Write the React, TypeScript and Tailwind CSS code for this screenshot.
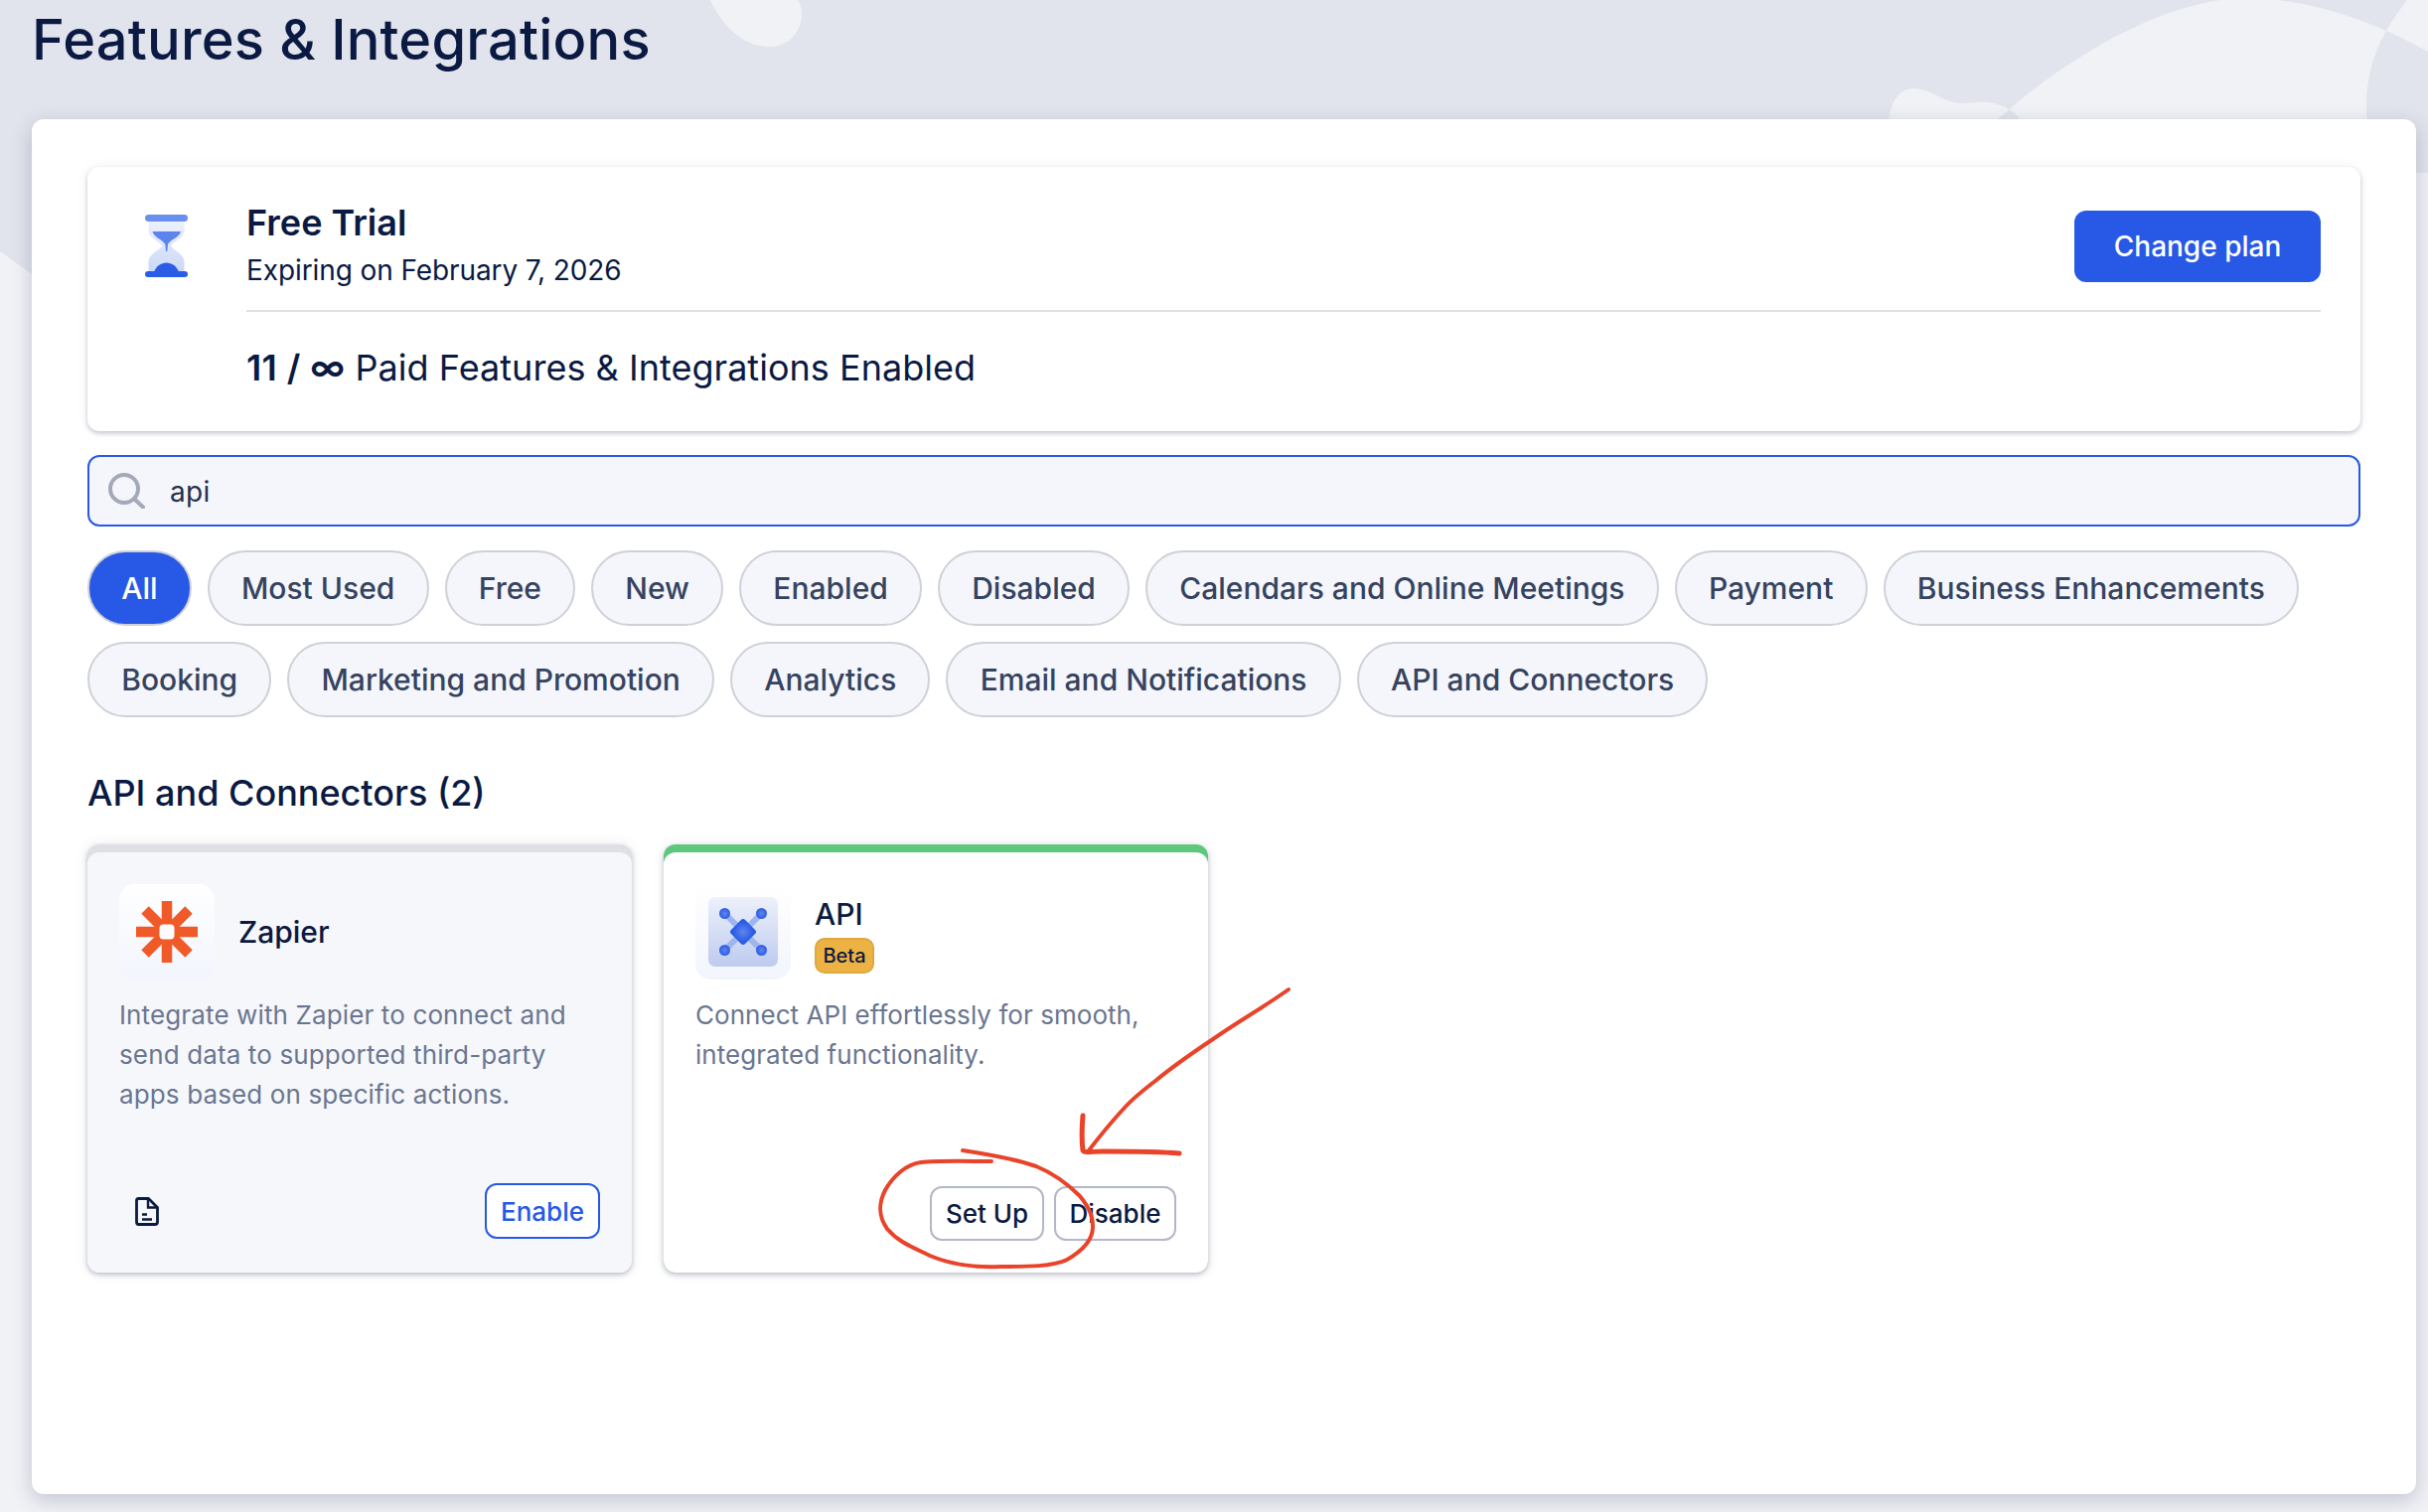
const chips = [
  "All",
  "Most Used",
  "Free",
  "New",
  "Enabled",
  "Disabled",
  "Calendars and Online Meetings",
  "Payment",
  "Business Enhancements",
  "Booking",
  "Marketing and Promotion",
  "Analytics",
  "Email and Notifications",
  "API and Connectors",
];

function Backdrop() {
  return (
    <svg className="absolute inset-0" width="2444" height="1522" viewBox="0 0 2444 1522" fill="none">
      <path
        fillRule="evenodd"
        fill="#f1f2f6"
        d="M715 0C725 22 745 47 775 47C795 47 808 30 807 12C807 8 805 3 803 0Z M1990 140C2060 70 2170 0 2258 -2C2330 -2 2395 25 2444 52L2444 140Z M2423 0C2400 30 2382 60 2382 110L2384 140L2444 140L2444 0Z M1902 140C1898 110 1908 89 1927 89C1942 89 1958 104 1975 104C1988 104 2005 98 2027 113C2033 119 2037 125 2038 140Z"
      />
      <path fill="#f1f2f6" d="M0 253L32 276L2300 300L2432 174L2444 174L2444 1522L0 1522Z" />
    </svg>
  );
}

function Hourglass() {
  return (
    <svg width="43" height="63" viewBox="0 0 43 63" fill="none" className="mt-[14px] shrink-0">
      <defs>
        <linearGradient id="glass" x1="0" y1="0" x2="0" y2="1">
          <stop offset="0" stopColor="#eef1fc" />
          <stop offset="1" stopColor="#cbd8f7" />
        </linearGradient>
      </defs>
      <path
        d="M3.5 6H39.5V16C39.5 24 28 27 26 31.5C28 36 39.5 39 39.5 48V58H3.5V48C3.5 39 15 36 17 31.5C15 27 3.5 24 3.5 16Z"
        fill="url(#glass)"
      />
      <rect x="0" y="0" width="43" height="7" rx="3.5" fill="#6a90ef" />
      <path d="M7.5 17H36C35 23 25 25 23 30L22.3 37H21L20.3 30C18 25 8.5 23 7.5 17Z" fill="#5b84ec" />
      <path d="M9 58C11 52 16 48.5 21.5 48.5C27 48.5 32 52 34 58Z" fill="#2b5ce6" />
      <rect x="0" y="57" width="43" height="6" rx="3" fill="#2b5ce6" />
    </svg>
  );
}

function SearchIcon() {
  return (
    <svg width="37" height="36" viewBox="0 0 37 36" fill="none" className="shrink-0">
      <circle cx="16" cy="16" r="14" stroke="#a4a9b8" strokeWidth="4" />
      <path d="M26.5 26.5L35 34.5" stroke="#a4a9b8" strokeWidth="4" strokeLinecap="round" />
    </svg>
  );
}

function ZapierLogo() {
  return (
    <svg width="64" height="64" viewBox="0 0 64 64" fill="none">
      <g stroke="#f05a28" strokeWidth="10.5">
        <path d="M32 1V63" />
        <path d="M1 32H63" />
        <path d="M10 10L54 54" />
        <path d="M54 10L10 54" />
      </g>
      <rect x="24.5" y="24.5" width="15" height="15" rx="4" fill="#fcfcfe" />
    </svg>
  );
}

function ApiLogo() {
  return (
    <svg width="70" height="70" viewBox="0 0 70 70" fill="none">
      <defs>
        <linearGradient id="apibox" x1="0" y1="0" x2="0" y2="1">
          <stop offset="0" stopColor="#eef1fb" />
          <stop offset="1" stopColor="#bdcbee" />
        </linearGradient>
        <radialGradient id="apidot">
          <stop offset="0" stopColor="#5f87ee" />
          <stop offset="1" stopColor="#2b5ce6" />
        </radialGradient>
      </defs>
      <rect width="70" height="70" rx="7" fill="url(#apibox)" />
      <path d="M16.5 16.5L53.5 53.5M53.5 16.5L16.5 53.5" stroke="#9fb5ee" strokeWidth="6" />
      <circle cx="16.5" cy="16.5" r="5.5" fill="url(#apidot)" />
      <circle cx="53.5" cy="16.5" r="5.5" fill="url(#apidot)" />
      <circle cx="16.5" cy="53.5" r="5.5" fill="url(#apidot)" />
      <circle cx="53.5" cy="53.5" r="5.5" fill="url(#apidot)" />
      <rect x="25" y="25" width="20" height="20" rx="3" transform="rotate(45 35 35)" fill="url(#apidot)" />
    </svg>
  );
}

function DocIcon() {
  return (
    <svg width="24" height="29" viewBox="0 0 24 29" fill="none">
      <path
        d="M3.5 1.5H13.5L22.5 10.5V25C22.5 26.5 21.5 27.5 20 27.5H3.5C2 27.5 1.5 26.5 1.5 25V3.5C1.5 2 2 1.5 3.5 1.5Z"
        stroke="#0b1a42"
        strokeWidth="2.8"
        strokeLinejoin="round"
      />
      <path d="M13 2V10.5H22" stroke="#0b1a42" strokeWidth="2.4" />
      <path d="M7 17.5H12M7 22.5H17" stroke="#0b1a42" strokeWidth="2.6" />
    </svg>
  );
}

function IconBox({ children }: { children: React.ReactNode }) {
  return (
    <div className="flex h-24 w-24 shrink-0 items-center justify-center rounded-2xl bg-gradient-to-b from-white to-[#f2f5fd]">
      {children}
    </div>
  );
}

function Annotation() {
  return (
    <svg className="pointer-events-none absolute inset-0" width="2444" height="1522" viewBox="0 0 2444 1522" fill="none">
      <path
        d="M1297 996C1272 1014 1245 1029 1221 1046C1200 1060 1180 1074 1163 1088C1150 1098 1140 1106 1132 1115C1118 1130 1106 1145 1096 1158"
        stroke="#e9432a"
        strokeWidth="4"
        strokeLinecap="round"
      />
      <path
        d="M1090 1123C1089 1135 1089 1150 1090 1158C1092 1161 1100 1159 1110 1159C1135 1159 1165 1159 1187 1161"
        stroke="#e9432a"
        strokeWidth="5"
        strokeLinecap="round"
        strokeLinejoin="round"
      />
      <path
        d="M998 1169C975 1169 945 1168 927 1170C912 1172 899 1184 891 1198C884 1212 884 1224 893 1237C905 1251 920 1256 936 1264C960 1274 985 1276 1007 1275C1035 1275 1060 1275 1074 1268C1088 1260 1100 1250 1100 1235C1100 1222 1095 1214 1087 1204C1075 1192 1060 1181 1043 1174C1020 1166 995 1162 969 1158"
        stroke="#e9432a"
        strokeWidth="4"
        strokeLinecap="round"
      />
    </svg>
  );
}

export default function App() {
  return (
    <main className="relative h-[1522px] overflow-hidden bg-[#e1e4ec] font-['Inter',sans-serif] text-[#0b1a42]">
      <Backdrop />

      <div className="relative">
        <header className="h-[120px] pl-8 pt-[2px]">
          <h1 className="text-[56px] leading-[76px] font-medium tracking-[0.2px]">Features &amp; Integrations</h1>
        </header>

        <section className="ml-8 mr-3 h-[1384px] rounded-xl bg-white px-14 pt-12 shadow-[0_6px_20px_rgba(50,60,100,0.25)]">
          <div className="flex h-[266px] gap-[59px] rounded-xl bg-white pl-[58px] pr-10 pt-[34px] shadow-[0_2px_4px_rgba(50,55,90,0.28),0_0_14px_rgba(50,55,90,0.05)]">
            <Hourglass />
            <div className="min-w-0 flex-1">
              <div className="flex items-center justify-between border-b-2 border-[#dfe0e6] pb-5">
                <div>
                  <h2 className="text-[36px] leading-[44px] font-semibold">Free Trial</h2>
                  <p className="mt-1.5 text-[28px] leading-10 tracking-[-0.1px]">Expiring on February 7, 2026</p>
                </div>
                <button className="mt-[2px] h-[72px] w-[248px] rounded-xl bg-[#2859e6] text-[28px] font-medium text-white">
                  Change plan
                </button>
              </div>
              <p className="mt-[34px] text-[36px] leading-[44px] tracking-[0.03px]">
                <span className="font-semibold tracking-[0.4px]">11 / ∞</span> Paid Features &amp; Integrations Enabled
              </p>
            </div>
          </div>

          <div className="mt-6 flex h-[72px] items-center gap-[25px] rounded-xl border-2 border-[#2859e6] bg-[#f4f6fb] pl-[19px] text-[28px] text-[#26304f]">
            <SearchIcon />
            <span className="pt-[2px] tracking-[0.3px]">api</span>
          </div>

          <div className="mt-6 flex flex-wrap gap-4">
            {chips.map((chip) => (
              <button
                key={chip}
                className={
                  chip === "All"
                    ? "h-[76px] rounded-full border-[2.5px] border-[#cfd1d9] bg-[#2859e6] px-[32.2px] text-[30px] font-medium text-white"
                    : "h-[76px] rounded-full border-[2.5px] border-[#cfd1d9] bg-[#f4f6fb] px-[32.2px] text-[30px] font-medium text-[#36435f]"
                }
              >
                {chip}
              </button>
            ))}
          </div>

          <h2 className="mt-[54px] text-[36px] leading-[44px] font-medium">API and Connectors (2)</h2>

          <div className="mt-[30px] flex gap-8">
            <article className="h-[431px] w-[548px] rounded-xl bg-[#dfe0e6] pt-2 shadow-[0_2px_5px_rgba(50,55,90,0.3),0_0_14px_rgba(50,55,90,0.08)]">
              <div className="flex h-full flex-col rounded-xl bg-[#f6f7fa] px-8 pb-[34px] pt-8">
                <div className="flex items-center gap-6">
                  <IconBox>
                    <ZapierLogo />
                  </IconBox>
                  <h3 className="text-[30px] font-medium">Zapier</h3>
                </div>
                <p className="mt-4 text-[26px] leading-10 tracking-[0.13px] text-[#6a7691]">
                  Integrate with Zapier to connect and send data to supported third-party apps based on specific actions.
                </p>
                <div className="mt-auto flex items-center justify-between pl-4">
                  <DocIcon />
                  <button className="h-14 w-[116px] rounded-xl border-[2.5px] border-[#2859e6] bg-white text-[26px] font-medium text-[#2859e6]">
                    Enable
                  </button>
                </div>
              </div>
            </article>

            <article className="h-[431px] w-[548px] rounded-xl bg-[#5ec77e] pt-2 shadow-[0_2px_5px_rgba(50,55,90,0.3),0_0_14px_rgba(50,55,90,0.08)]">
              <div className="flex h-full flex-col rounded-xl bg-white px-8 pb-8 pt-8">
                <div className="flex gap-6">
                  <IconBox>
                    <ApiLogo />
                  </IconBox>
                  <div className="pt-3">
                    <h3 className="text-[30px] leading-9 font-medium">API</h3>
                    <span className="mt-1.5 flex h-9 w-[60px] items-center justify-center rounded-[10px] border-2 border-[#dea73f] bg-[#edb244] text-[20px] font-medium">
                      Beta
                    </span>
                  </div>
                </div>
                <p className="mt-4 text-[26px] leading-10 tracking-[0.05px] text-[#6a7691]">
                  Connect API effortlessly for smooth, integrated functionality.
                </p>
                <div className="mt-auto flex justify-end gap-2.5">
                  <button className="h-[55px] w-[115px] rounded-xl border-2 border-[#b3b7c6] bg-white text-[26px] font-medium">
                    Set Up
                  </button>
                  <button className="h-[55px] w-[123px] rounded-xl border-2 border-[#b3b7c6] bg-white text-[26px] font-medium">
                    Disable
                  </button>
                </div>
              </div>
            </article>
          </div>
        </section>
      </div>

      <Annotation />
    </main>
  );
}
